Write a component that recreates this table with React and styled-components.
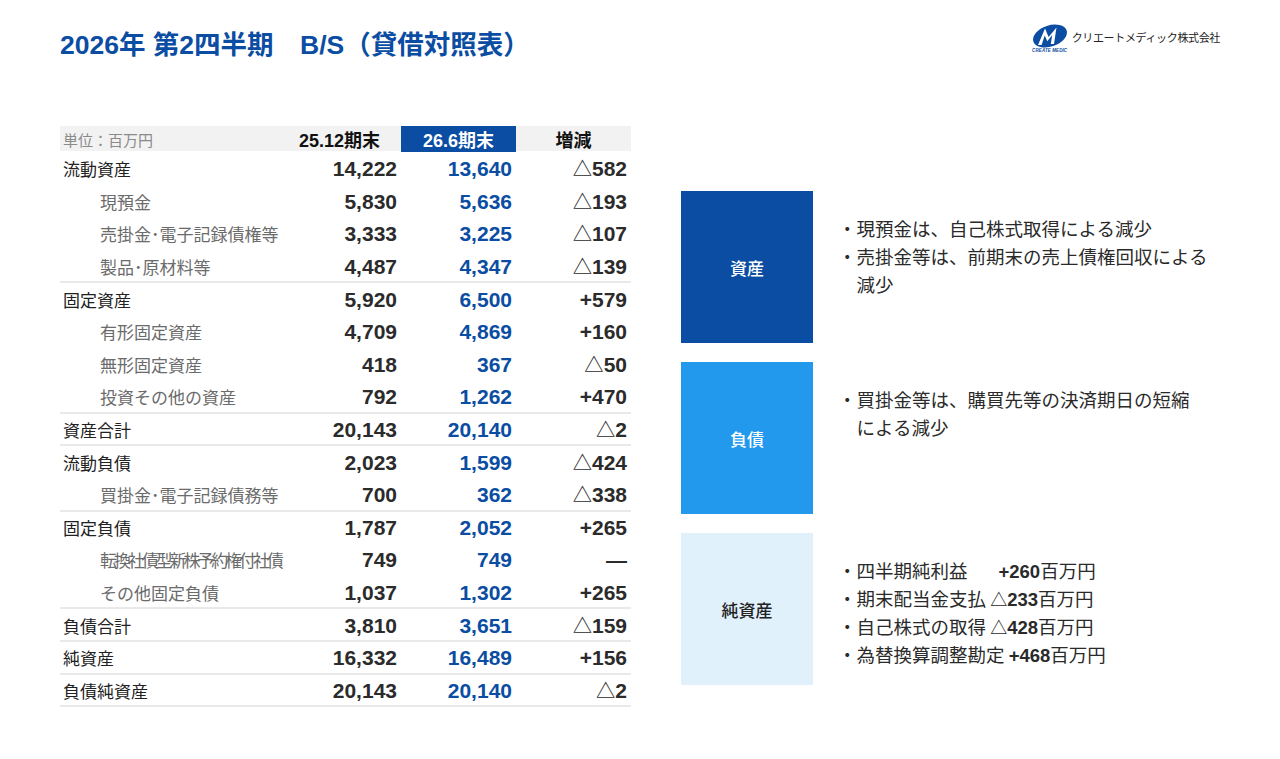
import React from 'react';
import styled, { createGlobalStyle } from 'styled-components';

const GlobalStyle = createGlobalStyle`
  html, body {
    margin: 0;
    padding: 0;
    background: #ffffff;
  }
  body {
    font-family: "Liberation Sans", "Noto Sans CJK JP", sans-serif;
    color: #222;
  }
`;

const BLUE = '#0a4da2';

const Page = styled.div`
  width: 1280px;
  height: 759px;
  box-sizing: border-box;
  padding: 28px 60px 0 60px;
  overflow: hidden;
`;

const Header = styled.header`
  display: flex;
  justify-content: space-between;
  align-items: flex-start;
`;

const Title = styled.h1`
  margin: 0;
  font-size: 26.5px;
  line-height: 34px;
  font-weight: 700;
  color: ${BLUE};
`;

const Logo = styled.div`
  display: flex;
  align-items: flex-start;
  gap: 4px;
  margin-top: -4px;
`;

const Mark = styled.div`
  display: flex;
  flex-direction: column;
  align-items: center;
  width: 36px;
`;

const MarkCaption = styled.span`
  font-size: 4.5px;
  line-height: 5px;
  font-weight: 700;
  font-style: italic;
  color: ${BLUE};
  white-space: nowrap;
  letter-spacing: 0.1px;
`;

const CompanyName = styled.span`
  font-family: "Noto Sans CJK JP", sans-serif;
  font-size: 11px;
  line-height: 14px;
  margin-top: 6px;
  color: #222;
  letter-spacing: -0.35px;
`;

const Main = styled.main`
  display: flex;
  align-items: flex-start;
  margin-top: 64px;
`;

const Table = styled.div`
  width: 571px;
  display: flex;
  flex-direction: column;
`;

const Cols = styled.div`
  display: grid;
  grid-template-columns: 226px 115px 115px 115px;
  align-items: center;
`;

const HeadRow = styled(Cols)`
  height: 25px;
  background: #f2f2f2;
  margin-bottom: 2px;
  align-items: stretch;
`;

const Unit = styled.div`
  display: flex;
  align-items: center;
  padding-left: 3px;
  font-family: "Noto Sans CJK JP", sans-serif;
  font-size: 15px;
  color: #8a8a8a;
`;

const HeadCell = styled.div`
  display: flex;
  align-items: center;
  justify-content: center;
  font-size: 18px;
  font-weight: 700;
  color: ${(p) => (p.$active ? '#ffffff' : '#111')};
  background: ${(p) => (p.$active ? BLUE : 'transparent')};
  padding-right: ${(p) => (p.$shift ? '8px' : '0')};
`;

const Row = styled(Cols)`
  height: 32.6px;
  box-sizing: border-box;
  padding-top: 2px;
  border-bottom: 2px solid ${(p) => (p.$divider ? '#e9e9e9' : 'transparent')};
`;

const Label = styled.div`
  font-family: "Noto Sans CJK JP", sans-serif;
  font-size: 17px;
  line-height: 28px;
  white-space: nowrap;
  padding-left: ${(p) => (p.$sub ? '40px' : '3px')};
  color: ${(p) => (p.$sub ? '#6b6b6b' : '#222')};
  letter-spacing: ${(p) => (p.$tight ? '-3.1px' : '0')};
`;

const Num = styled.div`
  text-align: right;
  padding-right: 4px;
  font-size: 21px;
  line-height: 28px;
  font-weight: 700;
  color: ${(p) => (p.$blue ? BLUE : '#2b2b2b')};
`;

// thin triangle taken from the CJK face, a touch smaller than the digits
const Tri = styled.span`
  font-family: "Noto Sans CJK JP", sans-serif;
  font-weight: 500;
  font-size: 0.92em;
  line-height: 1;
`;

const Side = styled.div`
  display: flex;
  flex-direction: column;
  gap: 19px;
  margin-left: 50px;
  margin-top: 65px;
`;

const Block = styled.section`
  display: flex;
  align-items: stretch;
`;

const Tag = styled.div`
  flex: 0 0 132px;
  height: 152px;
  display: flex;
  align-items: center;
  justify-content: center;
  font-family: "Noto Sans CJK JP", sans-serif;
  font-size: 17px;
  font-weight: 500;
  background: ${(p) => p.$bg};
  color: ${(p) => p.$fg};
`;

const Notes = styled.ul`
  list-style: none;
  margin: 0;
  padding: 23px 0 0 25px;
  width: 400px;
`;

const Note = styled.li`
  display: flex;
  height: 28px;
  align-items: center;
  font-family: "Noto Sans CJK JP", sans-serif;
  font-size: 18.5px;
  line-height: 28px;
  color: #2a2a2a;
  white-space: pre;

  &:has(br) {
    height: auto;
  }
`;

const Dot = styled.span`
  flex: 0 0 17px;
  align-self: flex-start;
`;

const Amount = styled.span`
  font-family: "Liberation Sans", "Noto Sans CJK JP", sans-serif;
  font-weight: 700;
  line-height: 1;
`;

const rows = [
  { label: '流動資産', a: '14,222', b: '13,640', c: '△582' },
  { label: '現預金', sub: true, a: '5,830', b: '5,636', c: '△193' },
  { label: '売掛金･電子記録債権等', sub: true, a: '3,333', b: '3,225', c: '△107' },
  { label: '製品･原材料等', sub: true, a: '4,487', b: '4,347', c: '△139', divider: true },
  { label: '固定資産', a: '5,920', b: '6,500', c: '+579' },
  { label: '有形固定資産', sub: true, a: '4,709', b: '4,869', c: '+160' },
  { label: '無形固定資産', sub: true, a: '418', b: '367', c: '△50' },
  { label: '投資その他の資産', sub: true, a: '792', b: '1,262', c: '+470', divider: true },
  { label: '資産合計', a: '20,143', b: '20,140', c: '△2', divider: true },
  { label: '流動負債', a: '2,023', b: '1,599', c: '△424' },
  { label: '買掛金･電子記録債務等', sub: true, a: '700', b: '362', c: '△338', divider: true },
  { label: '固定負債', a: '1,787', b: '2,052', c: '+265' },
  { label: '転換社債型新株予約権付社債', sub: true, tight: true, a: '749', b: '749', c: '—' },
  { label: 'その他固定負債', sub: true, a: '1,037', b: '1,302', c: '+265', divider: true },
  { label: '負債合計', a: '3,810', b: '3,651', c: '△159', divider: true },
  { label: '純資産', a: '16,332', b: '16,489', c: '+156', divider: true },
  { label: '負債純資産', a: '20,143', b: '20,140', c: '△2', divider: true },
];

// splits a leading △ off so it can use the thin CJK glyph
const withTri = (value) =>
  value.startsWith('△') ? (
    <>
      <Tri>△</Tri>
      {value.slice(1)}
    </>
  ) : (
    value
  );

const LogoMark = () => (
  <svg width="36" height="24" viewBox="0 0 36 24">
    <ellipse cx="18" cy="12" rx="17.5" ry="10.5" transform="rotate(-18 18 12)" fill={BLUE} />
    <path
      d="M6 21 L13 4.5 L16.6 13 L24.5 3.5 L22 20 L18.8 20 L20.2 11 L15.3 17.2 L12.7 11.5 L9.6 21 Z"
      fill="#ffffff"
    />
  </svg>
);

const App = () => (
  <>
    <GlobalStyle />
    <Page>
      <Header>
        <Title>2026年 第2四半期　B/S（貸借対照表）</Title>
        <Logo>
          <Mark>
            <LogoMark />
            <MarkCaption>CREATE MEDIC</MarkCaption>
          </Mark>
          <CompanyName>クリエートメディック株式会社</CompanyName>
        </Logo>
      </Header>

      <Main>
        <Table>
          <HeadRow>
            <Unit>単位：百万円</Unit>
            <HeadCell $shift>25.12期末</HeadCell>
            <HeadCell $active>26.6期末</HeadCell>
            <HeadCell>増減</HeadCell>
          </HeadRow>
          {rows.map((r) => (
            <Row key={r.label} $divider={r.divider}>
              <Label $sub={r.sub} $tight={r.tight}>{r.label}</Label>
              <Num>{r.a}</Num>
              <Num $blue>{r.b}</Num>
              <Num>{withTri(r.c)}</Num>
            </Row>
          ))}
        </Table>

        <Side>
          <Block>
            <Tag $bg={BLUE} $fg="#ffffff">資産</Tag>
            <Notes>
              <Note><Dot>・</Dot><span>現預金は、自己株式取得による減少</span></Note>
              <Note><Dot>・</Dot><span>売掛金等は、前期末の売上債権回収による<br />減少</span></Note>
            </Notes>
          </Block>
          <Block>
            <Tag $bg="#2399ee" $fg="#ffffff">負債</Tag>
            <Notes>
              <Note><Dot>・</Dot><span>買掛金等は、購買先等の決済期日の短縮<br />による減少</span></Note>
            </Notes>
          </Block>
          <Block>
            <Tag $bg="#e1f1fc" $fg="#222">純資産</Tag>
            <Notes>
              <Note><Dot>・</Dot><span>四半期純利益{'\u3000   '}<Amount>+260</Amount>百万円</span></Note>
              <Note><Dot>・</Dot><span>期末配当金支払 <Amount><Tri>△</Tri>233</Amount>百万円</span></Note>
              <Note><Dot>・</Dot><span>自己株式の取得 <Amount><Tri>△</Tri>428</Amount>百万円</span></Note>
              <Note><Dot>・</Dot><span>為替換算調整勘定 <Amount>+468</Amount>百万円</span></Note>
            </Notes>
          </Block>
        </Side>
      </Main>
    </Page>
  </>
);

export default App;
